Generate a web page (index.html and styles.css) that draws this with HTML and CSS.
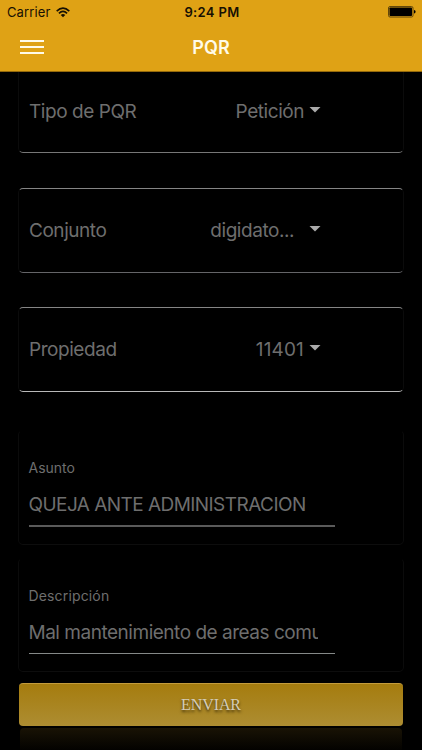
FILE: index.html
```html
<!DOCTYPE html>
<html lang="es">
<head>
<meta charset="utf-8">
<title>PQR</title>
<link rel="stylesheet" href="styles.css">
</head>
<body>
<header class="header">
  <div class="status">
    <div class="carrier"><span class="carrier-name">Carrier</span>
      <svg class="wifi" width="14" height="11" viewBox="0 0 14 11" fill="none" stroke="#171003" stroke-width="1.6"><path d="M.7 4.1Q7-1.9 13.3 4.1M2.9 6.4Q7 2.5 11.1 6.4"/><path d="M7 10.2 4.7 7.9Q7 5.9 9.3 7.9Z" fill="#171003" stroke="none"/></svg>
    </div>
    <span class="time">9:24 PM</span>
    <svg class="battery" width="28" height="12" viewBox="0 0 28 12"><rect x=".5" y=".5" width="24.5" height="10.5" rx="1.5" fill="none" stroke="#62470b"/><rect x="1.5" y="1.5" width="22.5" height="8.5" rx=".7"/><path d="M26 4q1.6.3 1.6 1.8T26 7.6Z"/></svg>
  </div>
  <div class="navbar">
    <svg class="menu" width="24" height="14" viewBox="0 0 24 14" stroke="#fffbe9" stroke-width="2"><path d="M0 1h24M0 7h24M0 13h24"/></svg>
    <h1 class="title">PQR</h1>
    <span></span>
  </div>
</header>
<main class="form">
  <section class="card select-card first"><span class="label">Tipo de PQR</span><span class="value">Petición</span><i class="arrow"></i></section>
  <section class="card select-card second"><span class="label">Conjunto</span><span class="value digi">digidato...</span><i class="arrow"></i></section>
  <section class="card select-card third"><span class="label">Propiedad</span><span class="value number">11401</span><i class="arrow"></i></section>
  <section class="card input-card subject"><div class="caption">Asunto</div><div class="field"><div class="content queja">QUEJA ANTE ADMINISTRACION</div></div></section>
  <section class="card input-card description"><div class="caption desc">Descripción</div><div class="field thin"><div class="content mal">Mal mantenimiento de areas comu</div></div></section>
  <button class="send">ENVIAR</button>
  <div class="reflection"></div>
</main>
</body>
</html>
```
FILE: styles.css
```css
* { box-sizing: border-box; }
body { margin: 0; background: #000; font-family: Inter, "Liberation Sans", sans-serif; height: 750px; overflow: hidden; }
.header { height: 72px; background: #dfa215; border-bottom: 1px solid #94690b; }
.status { height: 24px; display: grid; grid-template-columns: 1fr auto 1fr; align-items: center; padding: 0 6px 0 7px; color: #171003; font-size: 13px; line-height: 24px; }
.carrier { display: flex; align-items: center; gap: 6px; }
.carrier-name { letter-spacing: .12px; }
.time { font-weight: 600; letter-spacing: .35px; padding-left: 1px; }
.battery { justify-self: end; }
.navbar { height: 47px; display: grid; grid-template-columns: 1fr auto 1fr; align-items: center; padding: 0 20px; }
.menu { margin-top: -1px; }
.title { margin: 0; color: #fffbe9; font-size: 18px; font-weight: 600; line-height: 46px; letter-spacing: .15px; }
.form { display: flex; flex-direction: column; padding: 0 18px; }
.card { border: 1px solid #0b0b0b; border-radius: 5px; margin: 0; width: 386px; flex: none; }
.select-card { height: 85px; display: grid; grid-template-columns: 130px 1fr 12px; column-gap: 5px; align-items: center; padding: 0 82px 0 10px; margin-bottom: 34px; border-top-color: #858585; border-bottom: 1px solid #777; color: #6e6e6e; font-size: 19px; line-height: 24px; letter-spacing: -.45px; }
.first { height: 81px; margin-bottom: 35px; padding-bottom: 1px; border-top: 0; border-radius: 0 0 5px 5px; }
.second { border-bottom-color: #656568; }
.third { border-bottom-color: #b9b9b9; margin-bottom: 38px; }
.value { justify-self: end; }
.digi { margin-right: 10px; }
.number { letter-spacing: .15px; }
.arrow { width: 12px; height: 6px; background: #aaa; clip-path: polygon(0 0, 100% 0, 50% 100%); margin-top: -4px; }
.input-card { height: 115px; border-color: #000 #0b0b0b #0d0d0d; padding: 27px 0 0 9.5px; color: #6e6e6e; margin-bottom: 13px; }
.description { margin-bottom: 11px; height: 114px; }
.caption { font-size: 14px; line-height: 19px; }
.desc { letter-spacing: .15px; }
.field { width: 306px; height: 50px; border-bottom: 2px solid #5a5a5a; padding-top: 16px; }
.thin { height: 49px; border-bottom: 1px solid #858988; }
.content { width: 289px; overflow: hidden; white-space: nowrap; font-size: 19px; line-height: 24px; }
.queja { letter-spacing: -.55px; }
.mal { letter-spacing: -.48px; }
.send { margin: 0 0 0 1px; width: 384px; height: 43px; flex: none; border: 0; border-top: 1px solid #c49c3c; border-radius: 4px; background: linear-gradient(#a57c0e, #ad8d32); color: #d5cdb8; font: 16px "Liberation Serif", serif; letter-spacing: -.1px; text-shadow: 0 2px 3px #3b2c08; }
.reflection { width: 382px; height: 22px; margin: 2px 0 0 2px; border-radius: 4px 4px 0 0; background: linear-gradient(#191305, #030200); }
```
